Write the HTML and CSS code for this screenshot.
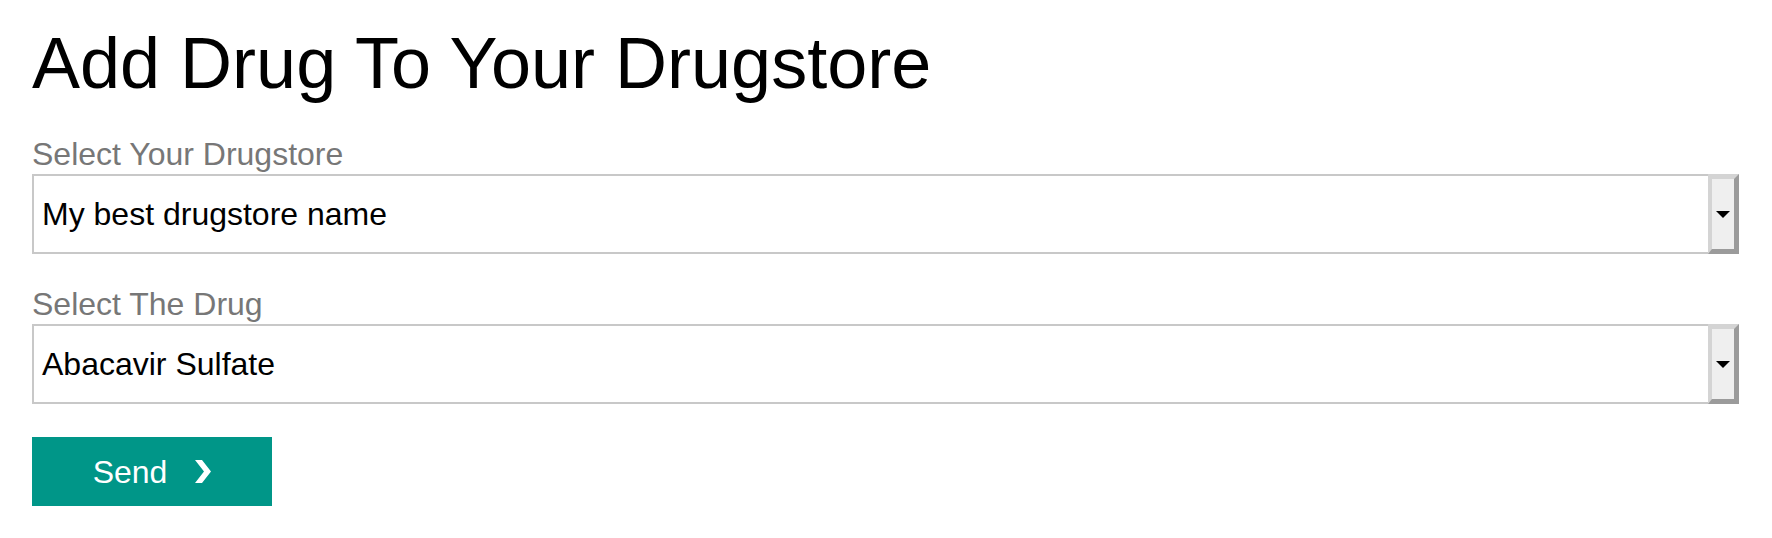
FILE: index.html
```html
<!DOCTYPE html>
<html lang="en">
<head>
<meta charset="utf-8">
<title>Add Drug To Your Drugstore</title>
<link rel="stylesheet" href="styles.css">
</head>
<body>
<main class="page">
  <h1 class="title">Add Drug To Your Drugstore</h1>
  <form class="form">
    <div class="field">
      <label class="label">Select Your Drugstore</label>
      <div class="select">
        <span class="select-value">My best drugstore name</span>
        <span class="select-arrow"><span class="arrow-tri"></span></span>
      </div>
    </div>
    <div class="field">
      <label class="label">Select The Drug</label>
      <div class="select">
        <span class="select-value">Abacavir Sulfate</span>
        <span class="select-arrow"><span class="arrow-tri"></span></span>
      </div>
    </div>
    <button type="button" class="send">
      <span class="send-text">Send</span>
      <svg class="chev" width="16" height="23" viewBox="0 0 16 23"><polygon points="0,0 7,0 16,11.5 7,23 0,23 9,11.5" fill="#fff"/></svg>
    </button>
  </form>
</main>
</body>
</html>
```
FILE: styles.css
```css
* { box-sizing: border-box; }
html, body { margin: 0; padding: 0; background: #fff; }
body { font-family: "Liberation Sans", Arial, Helvetica, sans-serif; }
.page { padding: 23px 33px 0 32px; }
.title {
  margin: 0;
  font-size: 72px;
  line-height: 80px;
  font-weight: 400;
  color: #000;
}
.form { display: flex; flex-direction: column; margin-top: 33px; }
.field { display: flex; flex-direction: column; margin-bottom: 32px; }
.label {
  font-size: 32px;
  line-height: 36px;
  color: #777;
  margin-bottom: 2px;
}
.select { display: flex; height: 80px; }
.select-value {
  flex: 1;
  display: flex;
  align-items: center;
  border: 2px solid #c8c8c8;
  border-right: 0;
  padding-left: 8px;
  font-size: 32px;
  line-height: 36px;
  color: #000;
}
.select-arrow {
  width: 31px;
  display: flex;
  align-items: center;
  justify-content: center;
  background: #efefef;
  border-style: solid;
  border-width: 5px 5px 5px 4px;
  border-color: #d4d4d4 #9b9b9b #9b9b9b #d4d4d4;
}
.arrow-tri {
  width: 0;
  height: 0;
  border-left: 7px solid transparent;
  border-right: 7px solid transparent;
  border-top: 7px solid #000;
}
.send {
  margin-top: 1px;
  align-self: flex-start;
  width: 240px;
  height: 69px;
  border: 0;
  background: #009688;
  color: #fff;
  font-family: "Liberation Sans", Arial, Helvetica, sans-serif;
  font-size: 32px;
  display: flex;
  align-items: center;
  justify-content: center;
  gap: 28px;
  padding: 0;
}
.send-text { line-height: 36px; }
.chev { display: block; }
```
